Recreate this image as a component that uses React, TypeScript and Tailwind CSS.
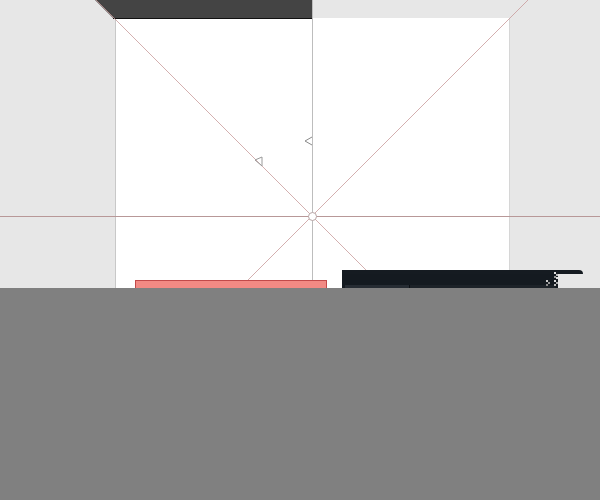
import React from "react";

export default function App() {
  return (
    <div className="w-[600px] h-[500px] flex flex-col overflow-hidden bg-[#e7e7e7]" style={{ fontFamily: "'Liberation Sans', sans-serif" }}>
      {/* Canvas */}
      <div className="relative h-[288px] shrink-0">
        {/* Artboard */}
        <div className="absolute left-[115px] top-[18px] w-[395px] h-[395px] bg-white border-l border-[#c8c8c8] border-r border-r-[#d6d6d6]" />

        {/* Guides */}
        <svg className="absolute inset-0" width="600" height="288" viewBox="0 0 600 288">
          <polygon points="95,0 312,0 312,18 113,18" fill="#444444" />
          <line x1="113" y1="18.5" x2="312" y2="18.5" stroke="#111" strokeWidth="1" />
          <line x1="312.5" y1="0" x2="312.5" y2="288" stroke="#bdbdbd" strokeWidth="1" />
          <line x1="0" y1="216.5" x2="600" y2="216.5" stroke="#b89898" strokeWidth="1" />
          <line x1="96" y1="0" x2="384" y2="288" stroke="#c99a9a" strokeWidth="0.8" />
          <line x1="528" y1="0" x2="240" y2="288" stroke="#c99a9a" strokeWidth="0.8" />
          <circle cx="312.5" cy="216.5" r="4" fill="white" stroke="#b7a5a5" strokeWidth="1" />
          <polyline points="312,137 305,141 312,145" fill="none" stroke="#8a8a8a" strokeWidth="1" />
          <polygon points="255,160 262,157 262,166" fill="none" stroke="#9a9a9a" strokeWidth="1" />
        </svg>

        {/* Selected layer */}
        <div className="absolute left-[135px] top-[280px] w-[192px] h-[10px] bg-[#f28a84] border border-[#c24a4a]" />

        {/* Floating panel */}
        <div className="absolute left-[342px] top-[270px] w-[241px] h-[20px] flex flex-col">
          <div className="h-[4px] bg-[#151b21] rounded-tr-sm" />
          <div className="flex-1 w-[216px] bg-[#141a20] flex flex-col justify-end">
            <div className="h-[5px] mx-[3px] flex">
              <div className="w-[64px] bg-[#262c33]" />
              <div className="flex-1 bg-[#1c2228] border-l border-[#0d1115]" />
            </div>
          </div>
          {/* resize grip */}
          <svg className="absolute left-[202px] top-[1px]" width="16" height="16" viewBox="0 0 16 16">
            <rect x="10" y="1" width="2" height="2" fill="#e0e0e0" />
            <rect x="12" y="3" width="2" height="2" fill="#bbb" />
            <rect x="10" y="5" width="2" height="2" fill="#999" />
            <rect x="12" y="6" width="2" height="2" fill="#ddd" />
            <rect x="2" y="9" width="2" height="2" fill="#ccc" />
            <rect x="4" y="11" width="2" height="2" fill="#999" />
            <rect x="10" y="9" width="2" height="2" fill="#ddd" />
            <rect x="12" y="11" width="2" height="2" fill="#aaa" />
            <rect x="2" y="13" width="2" height="2" fill="#888" />
            <rect x="10" y="13" width="2" height="2" fill="#bbb" />
          </svg>
        </div>
      </div>

      {/* Bottom overlay */}
      <div className="flex-1 bg-[#808080] relative z-10" />
    </div>
  );
}
